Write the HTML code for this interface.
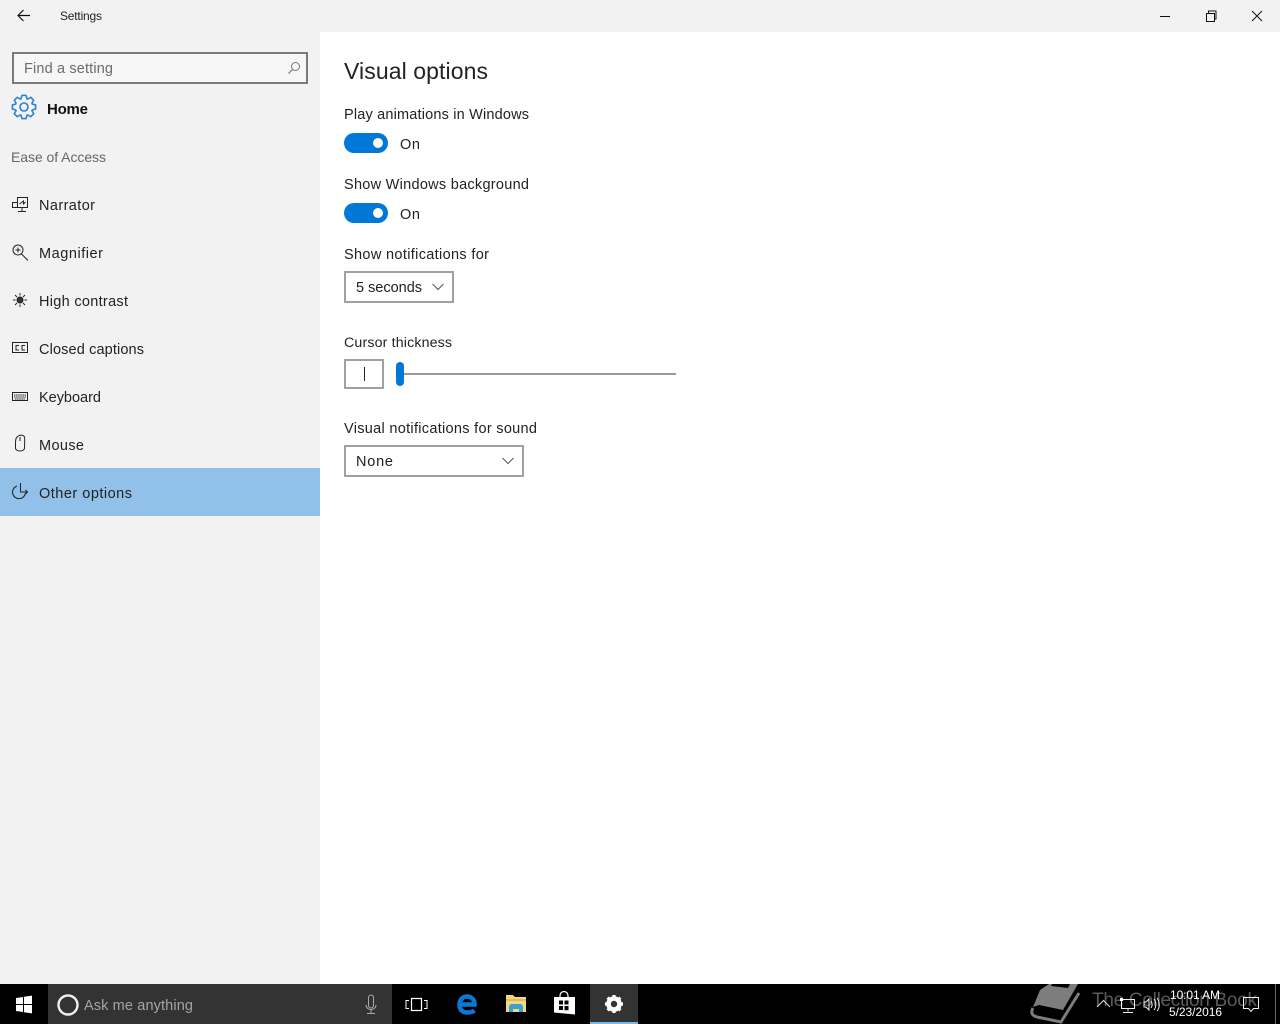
<!DOCTYPE html>
<html><head><meta charset="utf-8"><title>Settings</title>
<style>
html,body{margin:0;padding:0;background:#fff;width:1280px;height:1024px;overflow:hidden}
svg{display:block;position:absolute;left:0;top:0}
text{font-family:"Liberation Sans",sans-serif;font-size:14.5px;fill:#222;white-space:pre}
.i{fill:none;stroke:#222;stroke-width:1}
</style></head><body>
<svg width="1280" height="1024" viewBox="0 0 1280 1024" xmlns="http://www.w3.org/2000/svg">
<rect width="1280" height="1024" fill="#fff"/>
<rect width="1280" height="32" fill="#f2f2f2"/>
<rect y="32" width="320" height="952" fill="#f2f2f2"/>
<path d="M18 15.500H30M23.500 10L18 15.500L23.500 21" fill="none" stroke="#111" stroke-width="1.200"/>
<text x="60" y="20" style="font-size:12px" textLength="42" lengthAdjust="spacing">Settings</text>
<path d="M1160 16.500H1170" stroke="#111" stroke-width="1"/>
<path d="M1206.500 13.500h8v8h-8zM1208.500 13.500v-2.500h7.500v8h-1" fill="none" stroke="#111" stroke-width="1"/>
<path d="M1252 11L1262 21M1262 11L1252 21" stroke="#111" stroke-width="1"/>

<rect x="13" y="53" width="294" height="30" fill="#f6f6f6" stroke="#7a7a7a" stroke-width="2"/>
<text x="24" y="73" style="fill:#6b6b6b" textLength="89" lengthAdjust="spacing">Find a setting</text>
<circle cx="295.500" cy="66.500" r="4" fill="none" stroke="#777" stroke-width="1"/>
<path d="M292.500 69.500L288.500 73.500" stroke="#777" stroke-width="1.200"/>

<g transform="translate(24 107)" fill="none" stroke="#2b83cf" stroke-width="1.600">
<circle r="4"/>
<path stroke-linejoin="round" d="M-3 -8.270L-2.050 -11.620L2.050 -11.620L3 -8.270L3.730 -7.970L6.770 -9.660L9.660 -6.770L7.970 -3.730L8.270 -3L11.620 -2.050L11.620 2.050L8.270 3L7.970 3.730L9.660 6.770L6.770 9.660L3.730 7.970L3 8.270L2.050 11.620L-2.050 11.620L-3 8.270L-3.730 7.970L-6.770 9.660L-9.660 6.770L-7.970 3.730L-8.270 3L-11.620 2.050L-11.620 -2.050L-8.270 -3L-7.970 -3.730L-9.660 -6.770L-6.770 -9.660L-3.730 -7.970Z"/>
</g>
<text x="47" y="114" style="font-size:15px;font-weight:700;fill:#111" textLength="41" lengthAdjust="spacing">Home</text>
<text x="11" y="162" style="font-size:14px;fill:#666" textLength="95" lengthAdjust="spacing">Ease of Access</text>

<text x="39" y="210" textLength="56" lengthAdjust="spacing">Narrator</text>
<text x="39" y="258" textLength="64" lengthAdjust="spacing">Magnifier</text>
<text x="39" y="306" textLength="89" lengthAdjust="spacing">High contrast</text>
<text x="39" y="354" textLength="105" lengthAdjust="spacing">Closed captions</text>
<text x="39" y="402" textLength="62" lengthAdjust="spacing">Keyboard</text>
<text x="39" y="450" textLength="45" lengthAdjust="spacing">Mouse</text>
<rect y="468" width="320" height="48" fill="#91c1e8"/>
<text x="39" y="498" textLength="93" lengthAdjust="spacing">Other options</text>

<!-- nav icons -->
<path class="i" d="M17.500 197.500h10v10h-10zM17.500 202.500h-5v5h5M22 207.500v3.500M18 211.500h8M19.500 204l4-3v3l2-2"/>
<circle class="i" cx="18" cy="250" r="5"/><path class="i" d="M15.500 250h5M18 247.500v5M21.500 254l6.500 6.500"/>
<circle cx="20" cy="300" r="3" fill="#333" stroke="#222"/>
<path class="i" d="M20 293v2.500M20 304.500v2.500M13 300h2.500M24.500 300h2.500M15 295l2 2M23 303l2 2M25 295l-2 2M17 303l-2 2"/>
<rect class="i" x="12.500" y="342.500" width="15" height="10"/>
<path class="i" d="M19 345.500h-3v4.500h3M25 345.500h-3v4.500h3"/>
<rect class="i" x="12.500" y="392.500" width="15" height="8"/>
<path d="M14 395h12M14 397h12M15 399h10" stroke="#222" stroke-width="1" stroke-dasharray="1.500 .6"/>
<path class="i" d="M15.500 442c0-8 8-8 9-5 .5 2 0 9 0 11 0 4-9 4-9 0zM20 437v4"/>
<path class="i" d="M17 486a6.500 6.500 0 1 0 8.500 7M20.500 483v9h7M25.500 490l2 2-2 2"/>

<!-- content -->
<text x="344" y="79" style="font-size:23px;fill:#222" textLength="144" lengthAdjust="spacing">Visual options</text>
<text x="344" y="119" textLength="185" lengthAdjust="spacing">Play animations in Windows</text>
<rect x="344" y="133" width="44" height="20" rx="10" fill="#0078d7"/>
<circle cx="378" cy="143" r="5" fill="#fff"/>
<text x="400" y="149" textLength="20" lengthAdjust="spacing">On</text>
<text x="344" y="189" textLength="185" lengthAdjust="spacing">Show Windows background</text>
<rect x="344" y="203" width="44" height="20" rx="10" fill="#0078d7"/>
<circle cx="378" cy="213" r="5" fill="#fff"/>
<text x="400" y="219" textLength="20" lengthAdjust="spacing">On</text>
<text x="344" y="259" textLength="145" lengthAdjust="spacing">Show notifications for</text>
<rect x="345" y="272" width="108" height="30" fill="#fff" stroke="#a0a0a0" stroke-width="2"/>
<text x="356" y="292" textLength="66" lengthAdjust="spacing">5 seconds</text>
<path d="M432.500 284L438 289.500L443.500 284" fill="none" stroke="#555" stroke-width="1"/>
<text x="344" y="347" style="font-size:14.200px" textLength="108" lengthAdjust="spacing">Cursor thickness</text>
<rect x="345" y="360" width="38" height="28" fill="#fff" stroke="#a0a0a0" stroke-width="2"/>
<path d="M364.500 367V381" stroke="#222" stroke-width="1"/>
<rect x="400" y="373" width="276" height="2" fill="#999"/>
<rect x="396" y="362" width="8" height="24" rx="4" fill="#0078d7"/>
<text x="344" y="433" textLength="193" lengthAdjust="spacing">Visual notifications for sound</text>
<rect x="345" y="446" width="178" height="30" fill="#fff" stroke="#a0a0a0" stroke-width="2"/>
<text x="356" y="466" textLength="37" lengthAdjust="spacing">None</text>
<path d="M502.500 458L508 463.500L513.500 458" fill="none" stroke="#555" stroke-width="1"/>

<!-- taskbar -->
<rect y="984" width="1280" height="40" fill="#000"/>
<rect x="48" y="984" width="344" height="40" fill="#333"/>
<path d="M16 998l7-1v7h-7zM24 996.800l8-1.200v8.400h-8zM16 1005h7v7l-7-1zM24 1005h8v8.400l-8-1.200z" fill="#fff"/>
<circle cx="68" cy="1005" r="9.500" fill="none" stroke="#eee" stroke-width="2.400"/>
<text x="84" y="1010" style="fill:#a5a5a5" textLength="109" lengthAdjust="spacing">Ask me anything</text>
<path d="M368.500 997.500a2.500 2.500 0 0 1 5 0v8a2.500 2.500 0 0 1-5 0zM366 1005c0 6 10 6 10 0M371 1010v3M367 1013.500h8" fill="none" stroke="#aaa" stroke-width="1"/>
<path d="M411.500 998.500h10v12h-10z" fill="none" stroke="#fff" stroke-width="1.200"/>
<path d="M409 1000.500h-3v8h3M424 1000.500h3v8h-3" fill="none" stroke="#fff" stroke-width="1"/>
<!-- edge -->
<path d="M461 1004.500H474.500C474.500 999 471 996.500 467 996.500C462 996.500 459.500 1000.500 459.500 1005C459.500 1010 463 1012.500 467.500 1012.500C470 1012.500 472.500 1012 474.500 1010.500" fill="none" stroke="#0a78d7" stroke-width="4.500"/>
<!-- explorer -->
<path d="M506 995h7l2 2h11v15h-20z" fill="#f5d77f"/>
<rect x="506" y="999" width="20" height="2" fill="#e3bc5a"/>
<path d="M509 1012v-5c0-2 1-3 3-3h8c2 0 3 1 3 3v5h-4v-3h-6v3z" fill="#3aa0d8"/>
<!-- store -->
<path d="M560 997v-1.500a4 4 0 0 1 8 0v1.500" fill="none" stroke="#fff" stroke-width="1.200"/>
<path d="M554 997h21v17.500l-21-2z" fill="#fff"/>
<path d="M559 1000.500h4v4h-4zM564.500 1000.500h4v4h-4zM559 1006h4v4h-4zM564.500 1006h4v4.300h-4z" fill="#000"/>
<!-- settings -->
<rect x="590" y="984" width="48" height="40" fill="#333"/>
<rect x="590" y="1022" width="48" height="2" fill="#76b9ed"/>
<g transform="translate(614 1004)"><circle r="6" fill="none" stroke="#fff" stroke-width="3.600"/><path d="M0-9V9M-9 0H9M-6.400-6.400L6.400 6.400M6.400-6.400L-6.400 6.400" stroke="#fff" stroke-width="3.200"/><circle r="3.200" fill="#333"/></g>

<!-- watermark -->
<path d="M1040 990L1049 984H1078L1063 1010L1039 1005L1033 1007Z" fill="#7d7d7d"/>
<path d="M1052 984H1070L1068 988L1051 986Z" fill="#000"/>
<path d="M1033 1008C1030 1013 1033 1016 1037 1017L1061 1022L1079 993" fill="none" stroke="#7d7d7d" stroke-width="3"/>
<text x="1092" y="1006" style="font-size:19px;fill:#5a5a5a" textLength="165" lengthAdjust="spacing">The Collection Book</text>
<!-- tray -->
<path d="M1097 1007L1103.500 1000.500L1110 1007" fill="none" stroke="#ddd" stroke-width="1"/>
<path d="M1121.500 999.500h13v9h-13zM1128 1008.500v3M1123 1012.500h10" fill="none" stroke="#eee" stroke-width="1"/>
<rect x="1120" y="998" width="3" height="3" fill="#fff"/>
<path d="M1144 1002h2l3-3v11l-3-3h-2zM1151 1001c1.500 2 1.500 5 0 7M1154 999c2.500 3 2.500 8 0 11M1157 998c3 4 3 10 0 13" fill="none" stroke="#eee" stroke-width="1"/>
<text x="1170" y="999" style="font-size:12px;fill:#fff" textLength="50" lengthAdjust="spacing">10:01 AM</text>
<text x="1169" y="1016" style="font-size:12px;fill:#fff" textLength="53" lengthAdjust="spacing">5/23/2016</text>
<path d="M1243.500 997.500h15v11h-5l-2.500 3-2.500-3h-5z" fill="none" stroke="#eee" stroke-width="1"/>
<rect x="1275" y="984" width="1" height="40" fill="#666"/>
</svg>
</body></html>
